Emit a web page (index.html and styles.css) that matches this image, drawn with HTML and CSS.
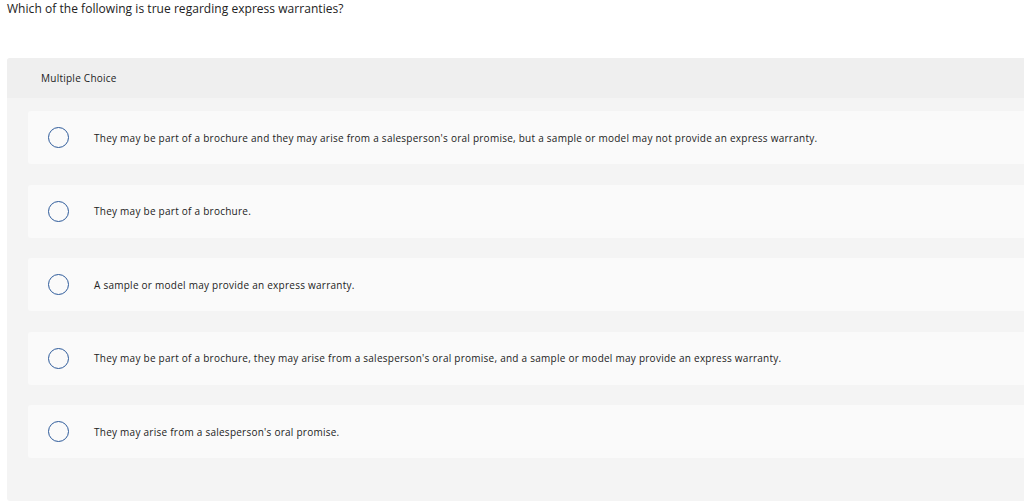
FILE: index.html
```html
<!DOCTYPE html>
<html>
<head>
<meta charset="utf-8">
<link rel="stylesheet" href="styles.css">
</head>
<body>
<p class="question">Which of the following is true regarding express warranties?</p>
<div class="card">
  <div class="card-head">Multiple Choice</div>
  <div class="options">
    <div class="option"><span class="radio"></span><span class="label">They may be part of a brochure and they may arise from a salesperson's oral promise, but a sample or model may not provide an express warranty.</span></div>
    <div class="option"><span class="radio"></span><span class="label">They may be part of a brochure.</span></div>
    <div class="option"><span class="radio"></span><span class="label">A sample or model may provide an express warranty.</span></div>
    <div class="option"><span class="radio"></span><span class="label">They may be part of a brochure, they may arise from a salesperson's oral promise, and a sample or model may provide an express warranty.</span></div>
    <div class="option"><span class="radio"></span><span class="label">They may arise from a salesperson's oral promise.</span></div>
  </div>
</div>
</body>
</html>
```
FILE: styles.css
```css
html, body { margin: 0; padding: 0; overflow: hidden; background: #fff; }
body {
  font-family: "Open Sans", "Liberation Sans", sans-serif;
  color: #2b2b2b;
  width: 1024px;
  height: 504px;
}
.question {
  margin: 0;
  padding: 1px 0 0 7px;
  font-size: 12px;
  line-height: 16px;
  letter-spacing: 0.04px;
  color: #222;
}
.card {
  margin: 41px 0 0 7px;
  width: 1040px;
  background: #f4f4f4;
  border-radius: 3px;
  padding-bottom: 43px;
}
.card-head {
  background: #efefef;
  height: 40px;
  display: flex;
  align-items: center;
  padding-left: 34px;
  font-size: 10px;
  letter-spacing: 0.25px;
  color: #222;
  border-radius: 3px 3px 0 0;
}
.options {
  display: flex;
  flex-direction: column;
  gap: 20.5px;
  padding: 13px 0 0 21px;
}
.option {
  background: #fafafa;
  height: 53px;
  display: flex;
  align-items: center;
  border-radius: 3px;
  padding-left: 20px;
}
.radio {
  width: 19px;
  height: 19px;
  border: 1.5px solid #2d5a9a;
  border-radius: 50%;
  flex: none;
}
.label {
  margin-left: 25px;
  font-size: 10px;
  letter-spacing: 0.25px;
  color: #222;
}
```
